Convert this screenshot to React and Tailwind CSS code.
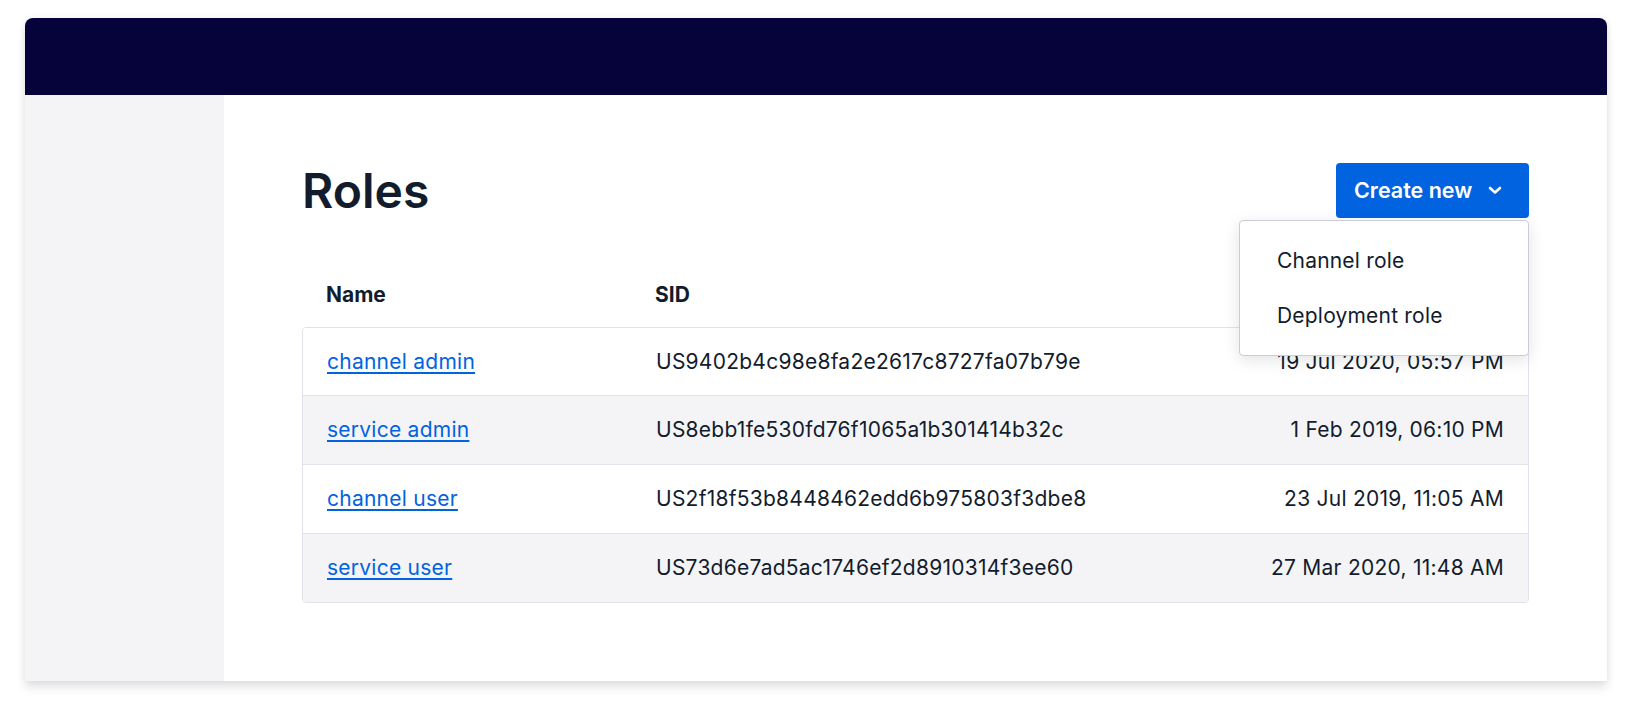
import React from "react";

const rows = [
  { name: "channel admin", sid: "US9402b4c98e8fa2e2617c8727fa07b79e", date: "19 Jul 2020, 05:57 PM" },
  { name: "service admin", sid: "US8ebb1fe530fd76f1065a1b301414b32c", date: "1 Feb 2019, 06:10 PM" },
  { name: "channel user", sid: "US2f18f53b8448462edd6b975803f3dbe8", date: "23 Jul 2019, 11:05 AM" },
  { name: "service user", sid: "US73d6e7ad5ac1746ef2d8910314f3ee60", date: "27 Mar 2020, 11:48 AM" },
];

export default function App() {
  return (
    <div
      className="w-[1632px] h-[712px] bg-white pt-[18px] pl-[25px] text-[#121c2d]"
      style={{ fontFamily: "Inter, 'Noto Sans', sans-serif" }}
    >
      <div className="w-[1582px] h-[663px] flex flex-col rounded-t-[8px] bg-white overflow-hidden shadow-[0_7px_10px_rgba(0,0,0,0.10),0_0_6px_rgba(0,0,0,0.07)]">
        <div className="h-[77px] bg-[#06033a] shrink-0" />
        <div className="flex flex-1">
          <aside className="w-[199px] bg-[#f4f4f6] shrink-0" />
          <main className="flex-1 px-[78px] pt-[68px]">
            <div className="flex items-center justify-between h-[55px]">
              <h1 className="text-[48px] font-semibold leading-none">Roles</h1>
              <div className="relative">
                <button className="h-[55px] w-[193px] rounded-[4px] bg-[#0263e0] text-white text-[21.5px] font-semibold flex items-center pl-[18px] gap-[16px]">
                  <span>Create new</span>
                  <svg width="14" height="9" viewBox="0 0 14 9" fill="none">
                    <polyline points="2,2 7,6.5 12,2" stroke="white" strokeWidth="2.6" strokeLinecap="round" strokeLinejoin="round" />
                  </svg>
                </button>
                <div className="absolute right-0 top-[57px] w-[290px] h-[136px] bg-white border border-[#cacdd8] rounded-[4px] shadow-[0_4px_16px_rgba(18,28,45,0.12)] flex flex-col justify-center z-10">
                  <div className="h-[55px] flex items-center pl-[37px] text-[21px] tracking-[0.2px]">Channel role</div>
                  <div className="h-[55px] flex items-center pl-[37px] text-[21px] tracking-[0.2px]">Deployment role</div>
                </div>
              </div>
            </div>
            <div className="grid grid-cols-[329px_1fr_auto] items-center h-[68px] pt-[4px] mt-[41px] text-[21px] font-bold">
              <div className="pl-[24px]">Name</div>
              <div className="pl-[24px]">SID</div>
              <div className="pr-[24px] text-right">Created</div>
            </div>
            <div className="border border-[#e1e3ea] rounded-[4px] overflow-hidden">
              {rows.map((r, i) => (
                <div
                  key={r.sid}
                  className={
                    "grid grid-cols-[329px_1fr_auto] items-center text-[21px] tracking-[0.25px] " +
                    (i % 2 === 1 ? "bg-[#f4f4f6] " : "bg-white ") +
                    (i > 0 ? "h-[69px] border-t border-[#e1e3ea]" : "h-[67px]")
                  }
                >
                  <div className="pl-[24px]">
                    <a href="#" className="text-[#0263e0] underline underline-offset-[3px] decoration-[1.5px]">{r.name}</a>
                  </div>
                  <div className="pl-[24px]">{r.sid}</div>
                  <div className="pr-[24px] text-right">{r.date}</div>
                </div>
              ))}
            </div>
          </main>
        </div>
      </div>
    </div>
  );
}
